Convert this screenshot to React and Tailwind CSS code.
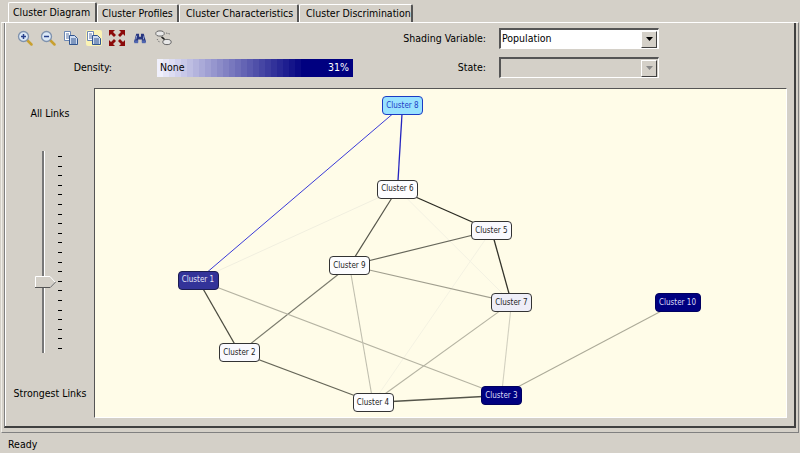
const UI_FONT = { fontFamily: '"DejaVu Sans Condensed", "DejaVu Sans", Roboto, sans-serif' }

const TABS = [
  { label: 'Cluster Profiles', cls: 'w-[82px] pl-[4px]' },
  { label: 'Cluster Characteristics', cls: 'w-[120px] pl-[6px]' },
  { label: 'Cluster Discrimination', cls: 'w-[114px] pl-[6px]' },
]

// node centres, in canvas coordinates
const NODES = {
  c8: { label: 'Cluster 8', x: 307.5, y: 16.5, w: 41, cls: 'bg-[#99e2ff] border-[#1c3cc4] text-[#1c3cc4]' },
  c6: { label: 'Cluster 6', x: 302.5, y: 100, w: 41, cls: 'bg-[#fdfdff] border-[#333] text-[#222]' },
  c5: { label: 'Cluster 5', x: 396.5, y: 141.5, w: 41, cls: 'bg-[#f9f9fe] border-[#333] text-[#222]' },
  c9: { label: 'Cluster 9', x: 254.5, y: 176.5, w: 41, cls: 'bg-[#fdfdff] border-[#333] text-[#222]' },
  c7: { label: 'Cluster 7', x: 416.5, y: 213.5, w: 41, cls: 'bg-[#eeeef8] border-[#333] text-[#222]' },
  c1: { label: 'Cluster 1', x: 103, y: 191, w: 41, cls: 'bg-[#333399] border-[#1c1c50] text-[#e4e4f6]' },
  c2: { label: 'Cluster 2', x: 144.5, y: 263.5, w: 41, cls: 'bg-[#f9f9fe] border-[#333] text-[#222]' },
  c4: { label: 'Cluster 4', x: 278, y: 313.5, w: 41, cls: 'bg-[#fdfdff] border-[#333] text-[#222]' },
  c3: { label: 'Cluster 3', x: 406.5, y: 306.5, w: 41, cls: 'bg-[#000080] border-[#000060] text-[#dcdcf8]' },
  c10: { label: 'Cluster 10', x: 582.5, y: 213.5, w: 46, cls: 'bg-[#000080] border-[#000060] text-[#dcdcf8]' },
}

const EDGES = [
  ['c6', 'c1', '#f1efdf', 1],
  ['c6', 'c7', '#f3f1e2', 1],
  ['c5', 'c4', '#f4f2e2', 1],
  ['c8', 'c1', '#3a3ad8', 1],
  ['c8', 'c6', '#2424c0', 1.3],
  ['c6', 'c9', '#55554a', 1.2],
  ['c6', 'c5', '#2a2a22', 1.3],
  ['c9', 'c5', '#66665a', 1.2],
  ['c9', 'c7', '#a09e8e', 1.1],
  ['c5', 'c7', '#33332a', 1.3],
  ['c9', 'c2', '#7a7a6c', 1.1],
  ['c1', 'c2', '#4c4c40', 1.3],
  ['c1', 'c3', '#b5b3a2', 1.1],
  ['c2', 'c4', '#666658', 1.2],
  ['c4', 'c3', '#55554a', 1.3],
  ['c9', 'c4', '#c0beae', 1.1],
  ['c7', 'c4', '#b5b3a2', 1.1],
  ['c7', 'c3', '#d2d0bf', 1.1],
  ['c3', 'c10', '#acaa98', 1.1],
]

const DENSITY_STEPS = Array.from({ length: 25 }, (_, i) => {
  const t = i / 24
  const c = Math.round(240 - 240 * t)
  return `rgb(${c},${c},${Math.round(252 - 124 * t)})`
})

export default function App() {
  return (
    <div className="w-[800px] h-[453px] overflow-hidden flex flex-col bg-[#d4d0c8] text-[10.5px] text-black" style={UI_FONT}>
      {/* Tab strip */}
      <div className="h-[22px] flex items-end pl-[8px] shrink-0">
        <div className="w-[89px] h-[20px] border-t border-l border-white border-r-2 border-r-[#555] rounded-t-[2px] pl-[4px] pt-[2px] whitespace-nowrap">
          Cluster Diagram
        </div>
        {TABS.map(t => (
          <div key={t.label} className={`${t.cls} h-[18px] border-t border-l border-white border-r-2 border-r-[#555] rounded-t-[2px] pt-px whitespace-nowrap`}>
            {t.label}
          </div>
        ))}
      </div>

      {/* Tab panel: outer frame */}
      <div className="h-[411px] w-[798px] ml-px shrink-0 border-t border-t-white border-l border-l-[#f0eee8] border-r border-b border-r-[#808080] border-b-[#808080] pl-[2px] pr-[2px] pb-[4px]">
        <div className="h-full border-l border-l-[#808080] border-r-2 border-b-2 border-r-[#404040] border-b-[#404040]">
          <div className="border-l border-white h-full flex flex-col">
            <Toolbar />
            <div className="flex flex-1 min-h-0">
              <LinkSlider />
              <Canvas />
            </div>
          </div>
        </div>
      </div>

      {/* Status bar */}
      <div className="flex-1 pl-2 pt-[4px]">Ready</div>
    </div>
  )
}

function Toolbar() {
  return (
    <div className="h-[65px] shrink-0">
      <div className="flex justify-between h-[28px] pr-[135px]">
        <div className="flex gap-[7px] pl-[11px] pt-[7px]">
          <ZoomIcon plus />
          <ZoomIcon />
          <CopyIcon />
          <CopyIcon glow />
          <FitIcon />
          <BinocularsIcon />
          <LinksIcon />
        </div>
        <div className="flex items-center gap-[13px] pt-[5px] h-[26px]">
          <span>Shading Variable:</span>
          <Combo value="Population" />
        </div>
      </div>
      <div className="flex justify-between h-[27px] pt-[6px] pr-[135px]">
        <div className="flex items-center">
          <span className="w-[106px] text-right">Density:</span>
          <div className="ml-[45px] mt-px w-[196px] h-[18px] relative flex items-center overflow-hidden bg-[#000080]">
            <div className="absolute inset-0 flex">
              {DENSITY_STEPS.map((c, i) => (
                <div key={i} className="w-[6px] h-full" style={{ backgroundColor: c }} />
              ))}
            </div>
            <span className="relative pl-[3px]">None</span>
            <span className="relative ml-auto pr-[4px] text-white">31%</span>
          </div>
        </div>
        <div className="flex items-center gap-[13px]">
          <span>State:</span>
          <Combo disabled />
        </div>
      </div>
    </div>
  )
}

function Combo({ value, disabled }) {
  return (
    <div className={`w-[160px] h-[21px] flex items-center border-t-2 border-l-2 border-t-[#555] border-l-[#555] border-b border-r border-b-white border-r-white ${disabled ? 'bg-[#d4d0c8]' : 'bg-white'}`}>
      <span className="flex-1 pl-px">{value}</span>
      <div className="w-[16px] h-[17px] mr-px bg-[#d4d0c8] border-r border-b border-[#404040] border-t-white border-l-white border-t border-l flex items-center justify-center">
        <svg width="7" height="4" viewBox="0 0 7 4"><path d="M0 0h7L3.500 4z" fill={disabled ? '#888' : '#000'} /></svg>
      </div>
    </div>
  )
}

function LinkSlider() {
  return (
    <div className="w-[88px] shrink-0 flex flex-col items-center pt-[18px] pb-[24px] justify-between">
      <span>All Links</span>
      <div className="relative w-full h-[202px] -mt-[4px]">
        {/* track */}
        <div className="absolute left-[36px] top-0 bottom-0 w-[3px] border-l-2 border-l-[#777] border-r border-r-white" />
        {/* ticks */}
        <div className="absolute left-[52px] top-[5px] bottom-[4px] flex flex-col justify-between">
          {Array.from({ length: 21 }, (_, i) => (
            <div key={i} className="w-[4px] h-px bg-black" />
          ))}
        </div>
        {/* thumb */}
        <svg className="absolute left-[29px] top-[125px]" width="21" height="12" viewBox="0 0 21 12">
          <path d="M.5 .5H15L20 6l-5 5.500H.5z" fill="#d4d0c8" stroke="#fff" />
          <path d="M0 11.500H15.200L20.500 6" fill="none" stroke="#555" />
        </svg>
      </div>
      <span className="whitespace-nowrap">Strongest Links</span>
    </div>
  )
}

function Canvas() {
  return (
    <div className="w-[693px] h-[330px] shrink-0 border-t border-l border-t-[#555] border-l-[#555] border-r border-b border-r-white border-b-white bg-[#fffce8] relative overflow-hidden">
      <svg className="absolute inset-0" width="691" height="328">
        {EDGES.map(([a, b, color, width]) => (
          <line key={a + b} x1={NODES[a].x} y1={NODES[a].y} x2={NODES[b].x} y2={NODES[b].y} stroke={color} strokeWidth={width} />
        ))}
      </svg>
      {Object.values(NODES).map(n => (
        <div
          key={n.label}
          className={`absolute h-[19px] flex items-center justify-center rounded-[4px] border whitespace-nowrap text-[8px] ${n.cls}`}
          style={{ left: n.x - n.w / 2, top: n.y - 9.5, width: n.w }}
        >
          {n.label}
        </div>
      ))}
    </div>
  )
}

function ZoomIcon({ plus }) {
  return (
    <svg width="16" height="16" viewBox="0 0 16 16">
      <path d="M10 10l4.500 4.500" stroke="#c8a030" strokeWidth="2.500" strokeLinecap="round" />
      <circle cx="6.500" cy="6.500" r="5" fill="#dbe8f6" stroke="#7f92ad" strokeWidth="1.300" />
      <path d={plus ? 'M4 6.500h5M6.500 4v5' : 'M4 6.500h5'} stroke="#27408b" strokeWidth="1.500" />
    </svg>
  )
}

function CopyIcon({ glow }) {
  return (
    <svg width="16" height="16" viewBox="0 0 16 16">
      {glow && <rect width="16" height="16" fill="#fbf3b4" rx="2" />}
      <path d="M1.500 1.500h6v9h-6z" fill="#fff" stroke="#6d88b4" />
      <path d="M3 4h3M3 6h3M3 8h3" stroke="#5675a8" />
      <path d="M6.500 5.500h5l3 3v6h-8z" fill="#cfdcf0" stroke="#31558f" />
      <path d="M8 9h5M8 11h5M8 13h5" stroke="#31558f" />
    </svg>
  )
}

function FitIcon() {
  return (
    <svg width="16" height="16" viewBox="0 0 16 16" fill="#8b0a0a">
      <path d="M0 0h6L4 2l3 3-2 2-3-3-2 2z" />
      <path d="M16 0v6l-2-2-3 3-2-2 3-3-2-2z" />
      <path d="M0 16v-6l2 2 3-3 2 2-3 3 2 2z" />
      <path d="M16 16h-6l2-2-3-3 2-2 3 3 2-2z" />
    </svg>
  )
}

function BinocularsIcon() {
  return (
    <svg width="16" height="16" viewBox="0 0 16 16" className="pt-px">
      <path d="M4 3h3v3h2V3h3l2.500 9H10V9H6v3H1.500z" fill="#28367f" />
      <path d="M3.500 9l1-4M11.500 9l1-4" stroke="#9fb0dc" />
      <rect x="2" y="10" width="4" height="3" fill="#5066b0" />
      <rect x="10" y="10" width="4" height="3" fill="#5066b0" />
    </svg>
  )
}

function LinksIcon() {
  return (
    <svg width="17" height="16" viewBox="0 0 17 16">
      <path d="M6 5l6 6M11 3l4 1M2 9l3 4" stroke="#777" fill="none" strokeDasharray="1.500 1" />
      <ellipse cx="5" cy="3.500" rx="4.200" ry="2.600" fill="#e8e8e8" stroke="#666" />
      <ellipse cx="12" cy="12" rx="4.200" ry="2.600" fill="#e8e8e8" stroke="#666" />
      <path d="M6.500 7l3 2.500" stroke="#111" strokeWidth="1.300" />
    </svg>
  )
}
